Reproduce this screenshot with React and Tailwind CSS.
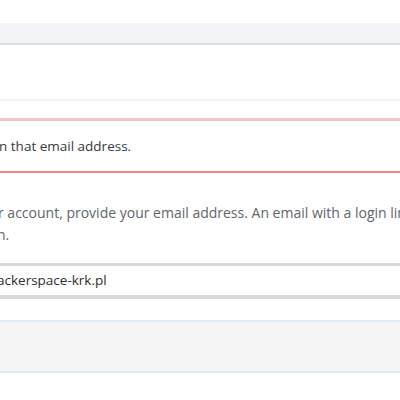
export default function App() {
  return (
    <div
      className="w-[400px] h-[400px] overflow-hidden bg-white"
      style={{ fontFamily: '"Open Sans", "Noto Sans", sans-serif' }}
    >
      {/* Top gray strip */}
      <div className="h-[23px]" />
      <div className="h-[22px] bg-[#f3f4f6] border-b-2 border-[#d6dee6]" />

      <div className="h-[54px]" />
      <div className="h-[2px] bg-[#eef3f7]" />
      <div className="h-[17px]" />

      {/* Error notice */}
      <div className="h-[55px] border-t-[3px] border-b-2 border-t-[#f0c6c6] border-b-[#e48b8b] flex items-center">
        <p className="-ml-[1px] text-[13.5px] text-[#3a3a3a] whitespace-nowrap">n that email address.</p>
      </div>

      {/* Info text */}
      <div className="pt-[29px] text-[14px] leading-[22px] text-[#60656b] whitespace-nowrap">
        <p className="-ml-[2px]">r account, provide your email address. An email with a login link will be sent to you.</p>
        <p className="-ml-[3px]">n.</p>
      </div>

      {/* Email input */}
      <div className="mt-[17px] h-[36px] border-t-[3px] border-b-[4px] border-[#d8d9dc] flex items-center">
        <span className="-ml-[3px] text-[13.5px] text-[#2e2e2e] whitespace-nowrap">ackerspace-krk.pl</span>
      </div>

      {/* Footer gray box */}
      <div className="mt-[21px] h-[53px] bg-[#f5f5f5] border-t-2 border-b-2 border-[#e2eaf0]" />
    </div>
  );
}
